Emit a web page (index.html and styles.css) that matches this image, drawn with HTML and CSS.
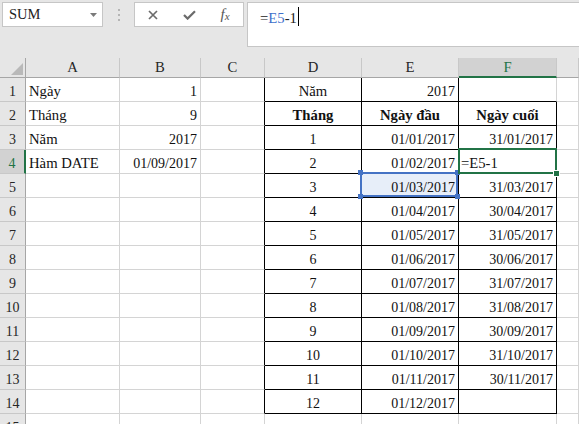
FILE: index.html
```html
<!DOCTYPE html>
<html lang="vi">
<head>
    <meta charset="UTF-8">
    <meta name="viewport" content="width=device-width, initial-scale=1.0">
    <title>Hàm DATE</title>
    <link rel="stylesheet" href="styles.css">
</head>
<body>
    <!-- name box + formula bar -->
    <div class="toolbar">
        <div class="namebox">
            <span>SUM</span>
            <svg class="drop" width="7" height="4" viewBox="0 0 7 4"><polygon points="0,0 7,0 3.5,4" fill="#7a7a7a"/></svg>
        </div>
        <div class="grip"><i></i><i></i><i></i></div>
        <div class="fnbox">
            <span class="slot">
                <svg width="10" height="10" viewBox="0 0 10 10"><path d="M1 1 L9 9 M9 1 L1 9" stroke="#6b6b6b" stroke-width="1.7" fill="none"/></svg>
            </span>
            <span class="slot">
                <svg width="13" height="10" viewBox="0 0 13 10"><path d="M1 5 L4.6 8.6 L12 1.2" stroke="#6b6b6b" stroke-width="2.2" fill="none"/></svg>
            </span>
            <span class="slot fx"><i>f</i><i class="sub">x</i></span>
        </div>
        <div class="formula">
            <span>=</span><span class="ref-txt">E5</span><span>-1</span><span class="caret"></span>
        </div>
    </div>

    <div class="sheet">
        <!-- column headers -->
        <div class="ch corner">
            <svg width="12" height="12" viewBox="0 0 12 12"><polygon points="0,12 12,0 12,12" fill="#b9b9b9"/></svg>
        </div>
        <div class="ch">A</div>
        <div class="ch">B</div>
        <div class="ch">C</div>
        <div class="ch">D</div>
        <div class="ch">E</div>
        <div class="ch on">F</div>
        <div class="ch"></div>

        <!-- row 1 -->
        <div class="rh">1</div>
        <div class="c">Ngày</div>
        <div class="c num">1</div>
        <div class="c edge"></div>
        <div class="c box mid">Năm</div>
        <div class="c box num">2017</div>
        <div class="c under"></div>
        <div class="c"></div>

        <!-- row 2 -->
        <div class="rh">2</div>
        <div class="c">Tháng</div>
        <div class="c num">9</div>
        <div class="c edge"></div>
        <div class="c box mid bold">Tháng</div>
        <div class="c box mid bold">Ngày đầu</div>
        <div class="c box mid bold">Ngày cuối</div>
        <div class="c"></div>

        <!-- row 3 -->
        <div class="rh">3</div>
        <div class="c">Năm</div>
        <div class="c num">2017</div>
        <div class="c edge"></div>
        <div class="c box mid digits">1</div>
        <div class="c box num">01/01/2017</div>
        <div class="c box num">31/01/2017</div>
        <div class="c"></div>

        <!-- row 4 (active row) -->
        <div class="rh on">4</div>
        <div class="c">Hàm DATE</div>
        <div class="c num">01/09/2017</div>
        <div class="c edge"></div>
        <div class="c box mid digits">2</div>
        <div class="c box num">01/02/2017</div>
        <div class="c box active">=E5-1<span class="handle"></span></div>
        <div class="c"></div>

        <!-- row 5 -->
        <div class="rh">5</div>
        <div class="c"></div>
        <div class="c"></div>
        <div class="c edge"></div>
        <div class="c box mid digits">3</div>
        <div class="c box num ref">01/03/2017<span class="refbox"><i class="tl"></i><i class="tr"></i><i class="bl"></i><i class="br"></i></span></div>
        <div class="c box num">31/03/2017</div>
        <div class="c"></div>

        <!-- row 6 -->
        <div class="rh">6</div>
        <div class="c"></div>
        <div class="c"></div>
        <div class="c edge"></div>
        <div class="c box mid digits">4</div>
        <div class="c box num">01/04/2017</div>
        <div class="c box num">30/04/2017</div>
        <div class="c"></div>

        <!-- row 7 -->
        <div class="rh">7</div>
        <div class="c"></div>
        <div class="c"></div>
        <div class="c edge"></div>
        <div class="c box mid digits">5</div>
        <div class="c box num">01/05/2017</div>
        <div class="c box num">31/05/2017</div>
        <div class="c"></div>

        <!-- row 8 -->
        <div class="rh">8</div>
        <div class="c"></div>
        <div class="c"></div>
        <div class="c edge"></div>
        <div class="c box mid digits">6</div>
        <div class="c box num">01/06/2017</div>
        <div class="c box num">30/06/2017</div>
        <div class="c"></div>

        <!-- row 9 -->
        <div class="rh">9</div>
        <div class="c"></div>
        <div class="c"></div>
        <div class="c edge"></div>
        <div class="c box mid digits">7</div>
        <div class="c box num">01/07/2017</div>
        <div class="c box num">31/07/2017</div>
        <div class="c"></div>

        <!-- row 10 -->
        <div class="rh">10</div>
        <div class="c"></div>
        <div class="c"></div>
        <div class="c edge"></div>
        <div class="c box mid digits">8</div>
        <div class="c box num">01/08/2017</div>
        <div class="c box num">31/08/2017</div>
        <div class="c"></div>

        <!-- row 11 -->
        <div class="rh">11</div>
        <div class="c"></div>
        <div class="c"></div>
        <div class="c edge"></div>
        <div class="c box mid digits">9</div>
        <div class="c box num">01/09/2017</div>
        <div class="c box num">30/09/2017</div>
        <div class="c"></div>

        <!-- row 12 -->
        <div class="rh">12</div>
        <div class="c"></div>
        <div class="c"></div>
        <div class="c edge"></div>
        <div class="c box mid digits">10</div>
        <div class="c box num">01/10/2017</div>
        <div class="c box num">31/10/2017</div>
        <div class="c"></div>

        <!-- row 13 -->
        <div class="rh">13</div>
        <div class="c"></div>
        <div class="c"></div>
        <div class="c edge"></div>
        <div class="c box mid digits">11</div>
        <div class="c box num">01/11/2017</div>
        <div class="c box num">30/11/2017</div>
        <div class="c"></div>

        <!-- row 14 -->
        <div class="rh">14</div>
        <div class="c"></div>
        <div class="c"></div>
        <div class="c edge"></div>
        <div class="c box mid digits">12</div>
        <div class="c box num">01/12/2017</div>
        <div class="c box"></div>
        <div class="c"></div>

        <!-- row 15 (cut off) -->
        <div class="rh">15</div>
        <div class="c"></div>
        <div class="c"></div>
        <div class="c"></div>
        <div class="c"></div>
        <div class="c"></div>
        <div class="c"></div>
        <div class="c"></div>
    </div>
</body>
</html>
```

FILE: styles.css
```css
body {
    margin: 0;
    width: 579px;
    height: 424px;
    overflow: hidden;
    background: #fff;
    font-family: 'Liberation Serif', 'Times New Roman', serif;
    color: #111;
}

/* ---- top bar ---- */
.toolbar {
    display: flex;
    align-items: flex-start;
    box-sizing: border-box;
    height: 58px;
    padding: 2px 0 0 2px;
    background: #e6e6e6;
}

.namebox {
    display: flex;
    align-items: center;
    box-sizing: border-box;
    width: 101px;
    height: 25px;
    padding: 0 5px 0 6px;
    background: #fff;
    border: 1px solid #c6c6c6;
    font-size: 14.5px;
    color: #222;
}

.namebox .drop {
    margin-left: auto;
}

.grip {
    display: flex;
    flex-direction: column;
    align-items: center;
    justify-content: center;
    gap: 3px;
    width: 31px;
    height: 25px;
}

.grip i {
    width: 2px;
    height: 2px;
    background: #b5b5b5;
}

.fnbox {
    display: flex;
    box-sizing: border-box;
    width: 110px;
    height: 25px;
    background: #fff;
    border: 1px solid #c6c6c6;
}

.slot {
    display: flex;
    align-items: center;
    justify-content: center;
    width: 36px;
}

.fx {
    font-size: 15px;
    color: #555;
    padding-bottom: 1px;
}

.fx .sub {
    font-size: 11px;
    margin-top: 4px;
}

.formula {
    flex: 1;
    box-sizing: border-box;
    height: 45px;
    margin-left: 3px;
    padding: 4px 0 0 12px;
    background: #fff;
    border: 1px solid #c6c6c6;
    border-right: none;
    font-size: 14.7px;
    line-height: 17px;
    color: #222;
}

.ref-txt {
    color: #3d6fcb;
}

.caret {
    display: inline-block;
    width: 1px;
    height: 19px;
    margin-left: 1px;
    background: #000;
    vertical-align: -3px;
}

/* ---- grid ---- */
.sheet {
    display: grid;
    grid-template-columns: 26px 94px 81px 64px 97px 97px 98px 1fr;
    grid-template-rows: 20px;
    grid-auto-rows: 24px;
}

.ch, .rh, .c {
    box-sizing: border-box;
    display: flex;
    font-size: 14.7px;
    line-height: 17px;
    white-space: nowrap;
}

.ch {
    align-items: center;
    justify-content: center;
    background: #e6e6e6;
    border-right: 1px solid #c8c8c8;
    border-bottom: 1px solid #a6a6a6;
    color: #262626;
}

.ch.corner {
    align-items: flex-end;
    justify-content: flex-end;
    padding: 0 2px 2px 0;
    border-right-color: #a6a6a6;
}

.ch.on {
    background: #d2d2d2;
    color: #217346;
    border-bottom: 2px solid #217346;
}

.rh {
    align-items: flex-end;
    justify-content: center;
    padding-bottom: 1px;
    background: #e6e6e6;
    border-right: 1px solid #a6a6a6;
    border-bottom: 1px solid #c8c8c8;
    font-size: 14px;
    color: #262626;
}

.rh.on {
    background: #d2d2d2;
    color: #217346;
    border-right: 2px solid #217346;
}

.c {
    align-items: flex-end;
    padding: 0 3px 1px;
    border-right: 1px solid #d4d4d4;
    border-bottom: 1px solid #d4d4d4;
}

.num {
    justify-content: flex-end;
    font-size: 14px;
}

.mid {
    justify-content: center;
}

.digits {
    font-size: 14px;
}

.bold {
    font-weight: bold;
}

/* black borders of the D1:F14 table */
.edge {
    border-right-color: #000;
}

.box {
    border-right-color: #000;
    border-bottom-color: #000;
}

.under {
    border-bottom-color: #000;
}

/* E5 - referenced cell */
.ref {
    position: relative;
    background: #e7eef9;
}

.refbox {
    position: absolute;
    top: -2px;
    left: -2px;
    right: 0;
    bottom: 0;
    border: 2px solid #4472c4;
    z-index: 2;
}

.refbox i {
    position: absolute;
    width: 5px;
    height: 5px;
    background: #4472c4;
}

.refbox .tl { top: -4px; left: -4px; }
.refbox .tr { top: -4px; right: -4px; }
.refbox .bl { bottom: -4px; left: -4px; }
.refbox .br { bottom: -4px; right: -4px; }

/* F4 - active cell */
.active {
    position: relative;
    padding-left: 2px;
}

.active::before {
    content: '';
    position: absolute;
    top: -2px;
    left: -1px;
    right: -1px;
    bottom: -1px;
    border: 2px solid #217346;
    z-index: 3;
}

.handle {
    position: absolute;
    right: -4px;
    bottom: -4px;
    width: 5px;
    height: 5px;
    background: #217346;
    border: 1px solid #fff;
    z-index: 4;
}
```
